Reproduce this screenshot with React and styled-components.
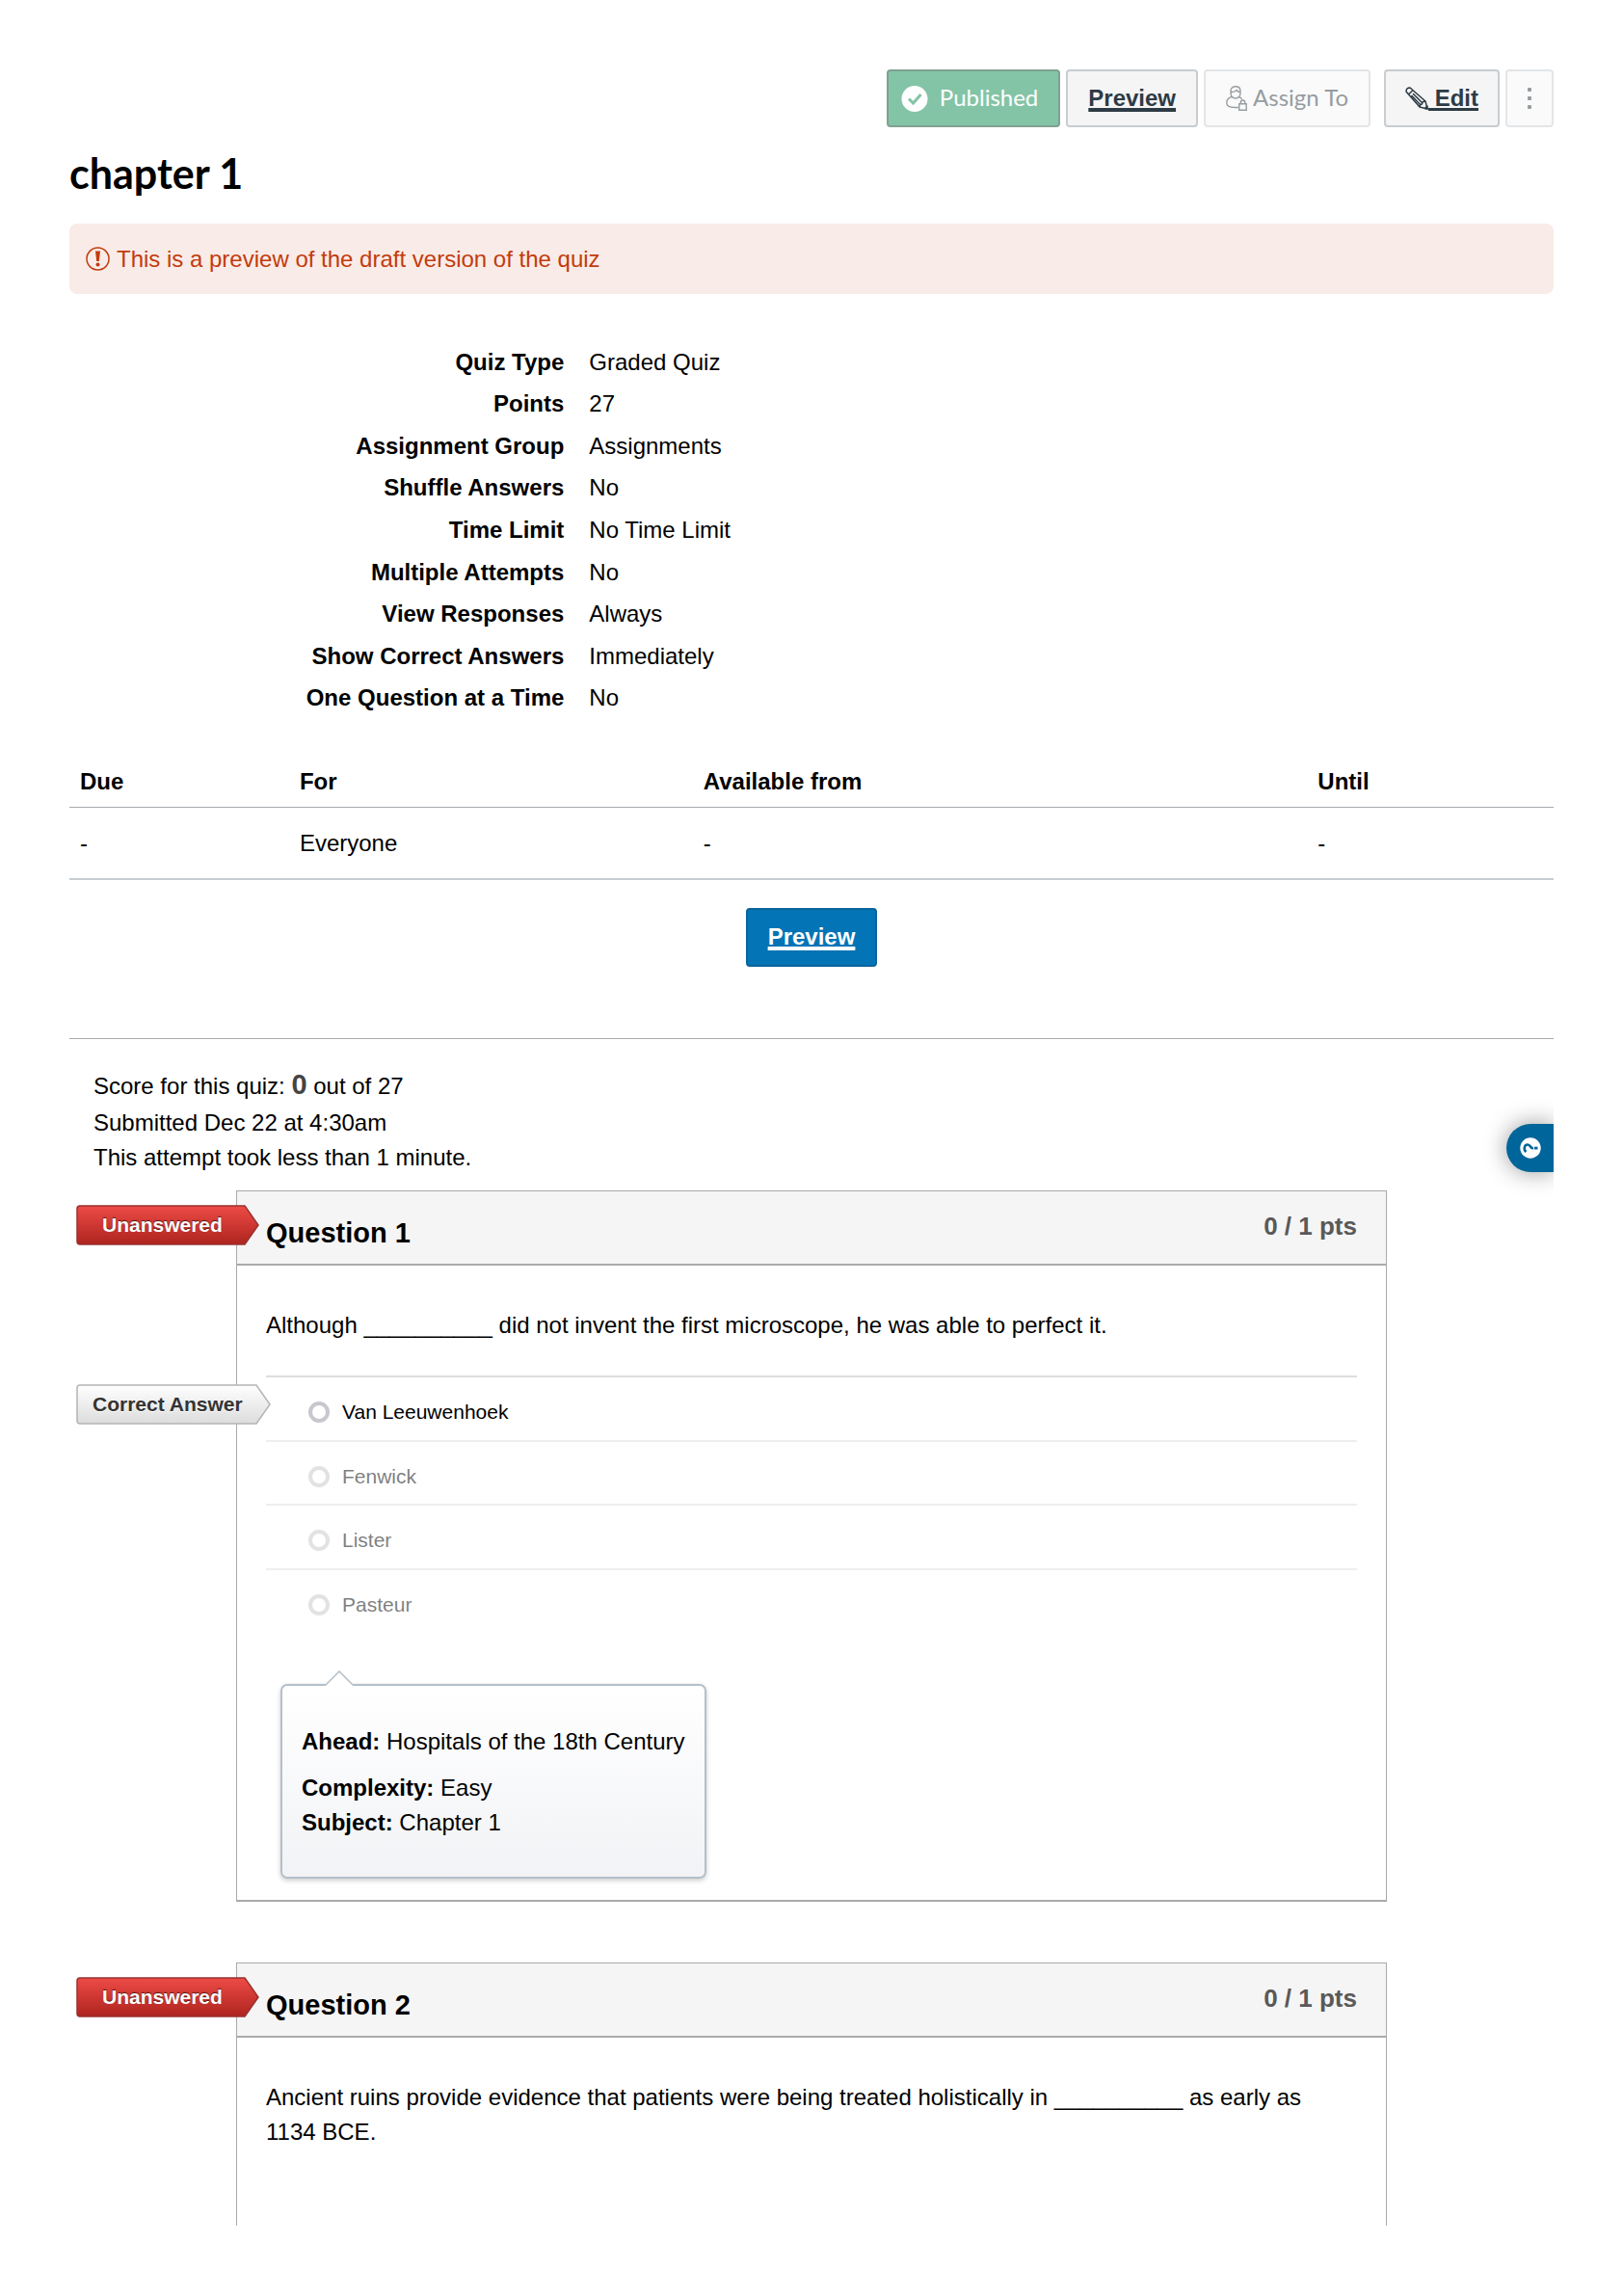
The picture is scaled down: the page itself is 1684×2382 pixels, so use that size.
import React from "react";
import styled, { createGlobalStyle } from "styled-components";

const quizInfo = [
  ["Quiz Type", "Graded Quiz"],
  ["Points", "27"],
  ["Assignment Group", "Assignments"],
  ["Shuffle Answers", "No"],
  ["Time Limit", "No Time Limit"],
  ["Multiple Attempts", "No"],
  ["View Responses", "Always"],
  ["Show Correct Answers", "Immediately"],
  ["One Question at a Time", "No"],
];

const answers = [
  { text: "Van Leeuwenhoek", correct: true },
  { text: "Fenwick" },
  { text: "Lister" },
  { text: "Pasteur" },
];

const CheckIcon = () => (
  <svg width="28" height="28" viewBox="0 0 28 28" aria-hidden="true">
    <circle cx="14" cy="14.500" r="13.500" fill="#fff" />
    <path d="M8 14.500l4.500 4.500 8-9" fill="none" stroke="#84c4a6" strokeWidth="3" />
  </svg>
);

const UserLockIcon = () => (
  <svg width="22" height="26" viewBox="0 0 22 26" fill="none" stroke="currentColor" strokeWidth="1.400" aria-hidden="true">
    <path d="M5 5.500C5 2.500 7 .8 10 .8s5 1.700 5 4.700v2c0 3-2 5.500-5 5.500S5 10.500 5 7.500z" />
    <path d="M5 6.500c3 .3 5-.4 6-2 .8 1.200 2 2 4 2M7.500 11.500C3 11.500.8 14 .8 17.500c0 3.500 3.500 5 8 5h4M12.500 11.500c2 0 3.300.8 4.300 2.300" />
    <path d="M13.700 18.700h7.500v6.500h-7.500zM15.300 18.700v-1.500a2.200 2.200 0 0 1 4.400 0v1.500" />
  </svg>
);

const PencilIcon = () => (
  <svg width="24" height="24" viewBox="0 0 24 24" fill="none" stroke="currentColor" strokeWidth="1.500" strokeLinejoin="round" aria-hidden="true">
    <path d="M1 5Q1 1 5 1L21 15 23 23 15 21zM3.500 8l4.500-4.500M15 21q0-3 2.500-3 0-3 3.500-3M6.500 9l9 9.500M8 7l9.500 9.500" />
    <path d="M20.500 22.500L23 20v3z" fill="currentColor" />
  </svg>
);

const WarningIcon = () => (
  <svg width="25" height="25" viewBox="0 0 25 25" aria-hidden="true">
    <circle cx="12.500" cy="12.500" r="11.500" fill="none" stroke="currentColor" strokeWidth="1.500" />
    <path d="M10 4.500h5l-1.200 10.500h-2.600z" fill="currentColor" />
    <circle cx="12.500" cy="18.500" r="2" fill="currentColor" />
  </svg>
);

const HelpIcon = () => (
  <svg width="22" height="22" viewBox="0 0 22 22" aria-hidden="true">
    <circle cx="11" cy="11" r="10.700" fill="#fff" />
    <path d="M6.500 15C3.500 13 4.500 7.500 8 7.500S10.500 12 14 11" fill="none" stroke="#00659b" strokeWidth="2.600" />
    <path d="M15 9.700h3.500v2.800H15z" fill="#00659b" />
  </svg>
);

// grey / red pointer shown to the left of a question
const Flag = ({ $kind, $top, children }) => {
  const correct = $kind === "correct";
  const width = correct ? 202 : 190;
  const tip = width - 15;
  const shape = `M4 1H${tip}L${width - 1} 21 ${tip} 41H4Q1 41 1 38V4Q1 1 4 1z`;
  return (
    <FlagWrapper $top={$top} $kind={$kind}>
      <svg width={width} height="42" viewBox={`0 0 ${width} 42`} aria-hidden="true">
        <defs>
          <linearGradient id={`flag-${$kind}`} x1="0" y1="0" x2="0" y2="1">
            <stop offset="0" stopColor={correct ? "#ffffff" : "#ee4b46"} />
            <stop offset="1" stopColor={correct ? "#dcdcdc" : "#ae241f"} />
          </linearGradient>
        </defs>
        <path d={shape} fill={`url(#flag-${$kind})`} stroke={correct ? "#b4b4b4" : "#98322f"} strokeWidth="1.500" />
      </svg>
      <span>{children}</span>
    </FlagWrapper>
  );
};

const Question = ({ number, clipped, children }) => (
  <QuestionCard $clipped={clipped}>
    <Flag $kind="unanswered" $top={14}>Unanswered</Flag>
    <QuestionHeader>
      <h2>Question {number}</h2>
      <Points>0 / 1 pts</Points>
    </QuestionHeader>
    <QuestionBody>{children}</QuestionBody>
  </QuestionCard>
);

const App = () => {
  return (
    <>
      <GlobalStyle />
      <Page>
        <Toolbar>
          <ToolbarButton as="button" $variant="published">
            <CheckIcon />
            <span>Published</span>
          </ToolbarButton>
          <ToolbarButton href="#preview">
            <u>Preview</u>
          </ToolbarButton>
          <ToolbarButton as="button" disabled $variant="muted">
            <UserLockIcon />
            <span>Assign To</span>
          </ToolbarButton>
          <EditButton href="#edit">
            <PencilIcon />
            <u>&nbsp;Edit</u>
          </EditButton>
          <KebabButton as="button" $variant="muted" aria-label="Manage">
            <i />
            <i />
            <i />
          </KebabButton>
        </Toolbar>

        <Title>chapter 1</Title>

        <Alert>
          <WarningIcon />
          This is a preview of the draft version of the quiz
        </Alert>

        <InfoList>
          {quizInfo.map(([label, value]) => (
            <React.Fragment key={label}>
              <dt>{label}</dt>
              <dd>{value}</dd>
            </React.Fragment>
          ))}
        </InfoList>

        <DatesTable>
          <thead>
            <tr>
              <th>Due</th>
              <th>For</th>
              <th>Available from</th>
              <th>Until</th>
            </tr>
          </thead>
          <tbody>
            <tr>
              <td>-</td>
              <td>Everyone</td>
              <td>-</td>
              <td>-</td>
            </tr>
          </tbody>
        </DatesTable>

        <PreviewRow>
          <PreviewButton href="#preview">Preview</PreviewButton>
        </PreviewRow>

        <Results>
          <Score>
            <p>
              Score for this quiz: <b>0</b> out of 27
            </p>
            <p>Submitted Dec 22 at 4:30am</p>
            <p>This attempt took less than 1 minute.</p>
          </Score>
          <HelpTab>
            <HelpButton aria-label="Help">
              <HelpIcon />
            </HelpButton>
          </HelpTab>

          <Question number={1}>
            <p>Although __________ did not invent the first microscope, he was able to perfect it.</p>
            <Answers>
              {answers.map(({ text, correct }) => (
                <Answer key={text} $correct={correct}>
                  {correct && <Flag $kind="correct" $top={7}>Correct Answer</Flag>}
                  <label>
                    <input type="radio" name="question-1" disabled />
                    {text}
                  </label>
                </Answer>
              ))}
            </Answers>
            <Comment>
              <svg width="30" height="16" viewBox="0 0 30 16" aria-hidden="true">
                <path d="M1 15L15 1 29 15V16H1z" fill="#fff" />
                <path d="M1 15L15 1 29 15" fill="none" stroke="#b4bfc8" strokeWidth="1.500" />
              </svg>
              <p>
                <b>Ahead:</b> Hospitals of the 18th Century
              </p>
              <p>
                <b>Complexity:</b> Easy
              </p>
              <p>
                <b>Subject:</b> Chapter 1
              </p>
            </Comment>
          </Question>

          <Question number={2} clipped>
            <p>
              Ancient ruins provide evidence that patients were being treated holistically in __________ as early as
              1134 BCE.
            </p>
          </Question>
        </Results>
      </Page>
    </>
  );
};

export default App;

const GlobalStyle = createGlobalStyle`
  * {
    box-sizing: border-box;
  }

  body {
    margin: 0;
    background: #fff;
    color: #000;
    font-family: "Liberation Sans", Arial, sans-serif;
    font-size: 24px;
    line-height: 36px;
  }

  h1, h2, p, dl, dd {
    margin: 0;
  }
`;

const Page = styled.main`
  padding: 72px 72px 64px;
`;

const Toolbar = styled.div`
  display: flex;
  justify-content: flex-end;
  gap: 6px;
`;

const buttonColors = {
  default: "background: #f5f5f5; border-color: #c7cdd1; color: #2d3b45;",
  published: "background: #84c4a6; border-color: #7fa191; color: #fff;",
  muted: "background: #fafafa; border-color: #e3e6e8; color: #969da2;",
};

const ToolbarButton = styled.a`
  height: 60px;
  padding: 0 21px;
  display: flex;
  align-items: center;
  gap: 6px;
  border: 2px solid;
  border-radius: 4px;
  font-family: Lato, sans-serif;
  font-size: 24px;
  text-decoration: none;
  ${(props) => buttonColors[props.$variant || "default"]}
  ${(props) => props.$variant === "published" && "padding: 0 21px 0 13px; gap: 12px;"}

  span {
    padding-bottom: 4px;
  }

  u {
    font-family: "Liberation Sans", Arial, sans-serif;
    font-weight: 700;
    text-decoration-thickness: 4px;
    text-underline-offset: 2px;
  }
`;

const EditButton = styled(ToolbarButton)`
  margin-left: 8px;
  padding: 0 20px;
  gap: 0;

  u {
    text-decoration-thickness: 3px;
  }
`;

const KebabButton = styled(ToolbarButton)`
  width: 50px;
  padding: 0;
  flex-direction: column;
  justify-content: center;
  gap: 5px;

  i {
    width: 4px;
    height: 4px;
    border-radius: 1px;
    background: currentColor;
  }
`;

const Title = styled.h1`
  padding: 20px 0 24px;
  font-family: Lato, sans-serif;
  font-size: 43px;
  line-height: 56px;
  font-weight: 700;
`;

const Alert = styled.div`
  height: 73px;
  padding: 0 17px;
  display: flex;
  align-items: center;
  gap: 7px;
  border-radius: 8px;
  background: #f9ebe7;
  color: #c23c0d;
`;

const InfoList = styled.dl`
  min-height: 392px;
  margin-top: 49px;
  display: grid;
  grid-template-columns: calc(100% / 3) 1fr;
  grid-template-rows: repeat(9, 1fr);
  column-gap: 26px;
  align-items: center;

  dt {
    text-align: right;
    font-weight: 700;
  }
`;

const DatesTable = styled.table`
  width: 100%;
  margin-top: 37px;
  border-collapse: collapse;
  table-layout: fixed;

  th, td {
    padding: 2px 11px 0;
    text-align: left;
    vertical-align: middle;
  }

  th {
    height: 54px;
    border-bottom: 1px solid #a5aaae;
  }

  td {
    height: 75px;
    border-bottom: 2px solid #c7cdd1;
  }

  th:nth-child(1) { width: 14.8%; }
  th:nth-child(2) { width: 27.2%; }
  th:nth-child(3) { width: 41.4%; }
`;

const PreviewRow = styled.div`
  padding: 29px 0 74px;
  display: flex;
  justify-content: center;
  border-bottom: 1px solid #aaa;
`;

const PreviewButton = styled.a`
  height: 61px;
  padding: 0 21px 2px;
  display: flex;
  align-items: center;
  border: 2px solid #0a639c;
  border-radius: 4px;
  background: #0374b5;
  color: #fff;
  font-weight: 700;
  text-decoration-thickness: 4px;
  text-underline-offset: 2px;
`;

const Results = styled.section`
  position: relative;
`;

const Score = styled.div`
  padding: 29px 25px 16px;

  p:first-child {
    margin-bottom: 2px;
  }

  b {
    color: #444;
    font-size: 29px;
  }
`;

// clips the shadow at the page edge
const HelpTab = styled.div`
  position: absolute;
  top: 58px;
  right: 0;
  padding: 30px 0 30px 30px;
  overflow: hidden;
`;

const HelpButton = styled.button`
  width: 49px;
  height: 50px;
  padding: 0 0 0 14px;
  display: flex;
  align-items: center;
  border: none;
  border-radius: 25px 0 0 25px;
  background: #00659b;
  box-shadow: 0 0 24px rgba(0, 0, 0, 0.4);
`;

const QuestionCard = styled.article`
  position: relative;
  margin: 0 173px 63px;
  border: 1px solid #aaa;
  border-bottom-width: 2px;
  ${(props) => props.$clipped && "min-height: 273px; margin-bottom: 0; border-bottom: none;"}
`;

const QuestionHeader = styled.header`
  height: 77px;
  padding: 0 30px;
  display: flex;
  justify-content: space-between;
  align-items: center;
  background: #f5f5f5;
  border-bottom: 2px solid #aaa;

  h2 {
    padding-top: 10px;
    font-size: 29px;
  }
`;

const Points = styled.span`
  padding-bottom: 4px;
  color: #595959;
  font-size: 26px;
  font-weight: 700;
`;

const QuestionBody = styled.div`
  padding: 44px 30px 22px;
`;

const Answers = styled.div`
  min-height: 266px;
  margin-top: 34px;
  display: grid;
  grid-template-rows: repeat(4, 1fr);
`;

const Answer = styled.div`
  position: relative;
  padding: 8px 0 0 44px;
  display: flex;
  align-items: center;
  border-top: 2px solid ${(props) => (props.$correct ? "#ddd" : "#eee")};

  label {
    display: flex;
    align-items: center;
    gap: 13px;
    font-size: 21px;
    opacity: ${(props) => (props.$correct ? 1 : 0.5)};
  }

  input {
    appearance: none;
    width: 22px;
    height: 22px;
    margin: 0;
    border: 4px solid #c7c7cd;
    border-radius: 50%;
  }
`;

const FlagWrapper = styled.div`
  position: absolute;
  top: ${(props) => props.$top}px;
  left: ${(props) => (props.$kind === "correct" ? -197 : -167)}px;
  display: grid;
  align-items: center;
  z-index: 1;

  svg, span {
    grid-area: 1 / 1;
  }

  span {
    padding-left: ${(props) => (props.$kind === "correct" ? 17 : 27)}px;
    color: ${(props) => (props.$kind === "correct" ? "#333" : "#fff")};
    font-size: 21px;
    font-weight: 700;
    text-shadow: ${(props) => (props.$kind === "correct" ? "0 1px 0 #fff" : "0 -1px 1px #5a1512")};
  }
`;

const Comment = styled.div`
  position: relative;
  width: fit-content;
  margin: 54px 15px 0;
  padding: 40px 20px 38px;
  border: 2px solid #b4bfc8;
  border-radius: 7px;
  background: linear-gradient(#fff, #f2f3f6);
  box-shadow: 0 2px 5px rgba(0, 0, 0, 0.2);

  svg {
    position: absolute;
    top: -16px;
    left: 44px;
  }

  p:nth-of-type(2) {
    margin-top: 12px;
  }
`;
